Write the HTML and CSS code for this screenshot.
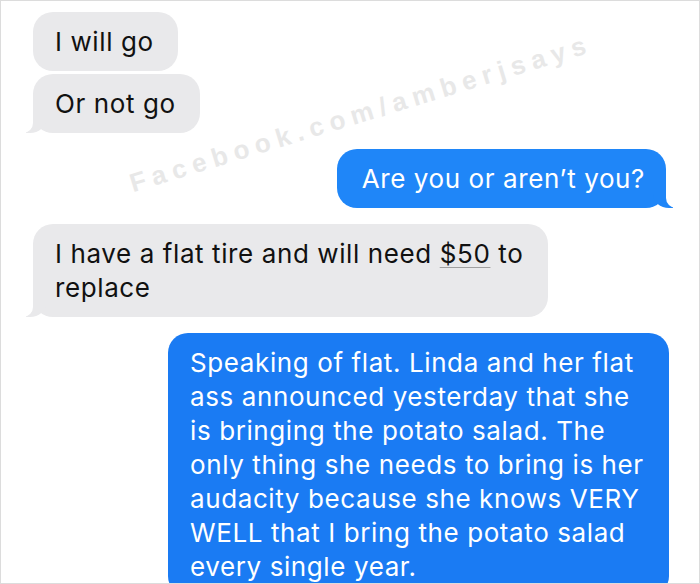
FILE: index.html
```html
<!DOCTYPE html>
<html lang="en">
<head>
  <meta charset="UTF-8">
  <title>Messages</title>
  <link rel="stylesheet" href="styles.css">
</head>
<body>

<div class="chat">
  <div class="watermark">Facebook.com/amberjsays</div>

  <div class="msg them first">I will go</div>
  <div class="msg them tail">Or not go</div>

  <div class="msg me tail gap">Are you or aren’t you?</div>

  <div class="msg them tail gap">I have a flat tire and will need <span class="link">$50</span> to replace</div>

  <div class="msg me gap big">Speaking of flat. Linda and her flat ass announced yesterday that she is bringing the potato salad. The only thing she needs to bring is her audacity because she knows VERY WELL that I bring the potato salad every single year.</div>
</div>

</body>
</html>
```

FILE: styles.css
```css
* {
  box-sizing: border-box;
}

body {
  margin: 0;
  background: #fff;
  font-family: 'Inter', 'Liberation Sans', sans-serif;
}

.chat {
  position: relative;
  width: 700px;
  height: 584px;
  overflow: hidden;
  border: 1px solid #dcdcdc;
  padding: 11px 33px 0 32px;
  display: flex;
  flex-direction: column;
  gap: 3px;
}

.watermark {
  position: absolute;
  left: 134px;
  top: 167px;
  font-family: 'Liberation Sans', sans-serif;
  font-weight: bold;
  font-size: 26px;
  letter-spacing: 6.5px;
  color: #e8e8e8;
  transform: rotate(-17deg);
  transform-origin: left bottom;
  white-space: nowrap;
}

.msg {
  position: relative;
  max-width: 512px;
  padding: 13px 21px 12px 22px;
  border-radius: 20px;
  font-size: 26px;
  letter-spacing: 0.6px;
  line-height: 34px;
}

.them {
  align-self: flex-start;
  max-width: 515px;
  padding-right: 24px;
  background: #e9e9eb;
  color: #111;
}

.me {
  align-self: flex-end;
  padding-left: 25px;
  background: #1f86f8;
  color: #fff;
}

.gap {
  margin-top: 13px;
}

.big {
  width: 501px;
  max-width: 501px;
  background: #1a7bf3;
  margin-right: -3px;
  padding-left: 22px;
  padding-right: 20px;
}

.link {
  text-decoration: underline;
  text-decoration-color: #a0a0a0;
  text-decoration-thickness: 1px;
  text-underline-offset: 4px;
}

/* bubble tails */
.tail::before,
.tail::after {
  content: "";
  position: absolute;
  bottom: 0;
  height: 22px;
}

.them.tail::before {
  left: -7px;
  width: 20px;
  background: #e9e9eb;
  border-bottom-right-radius: 16px 14px;
}

.them.tail::after {
  left: -26px;
  width: 26px;
  background: #fff;
  border-bottom-right-radius: 10px;
}

.me.tail::before {
  right: -7px;
  width: 20px;
  background: #1f86f8;
  border-bottom-left-radius: 16px 14px;
}

.me.tail::after {
  right: -26px;
  width: 26px;
  background: #fff;
  border-bottom-left-radius: 10px;
}
```
